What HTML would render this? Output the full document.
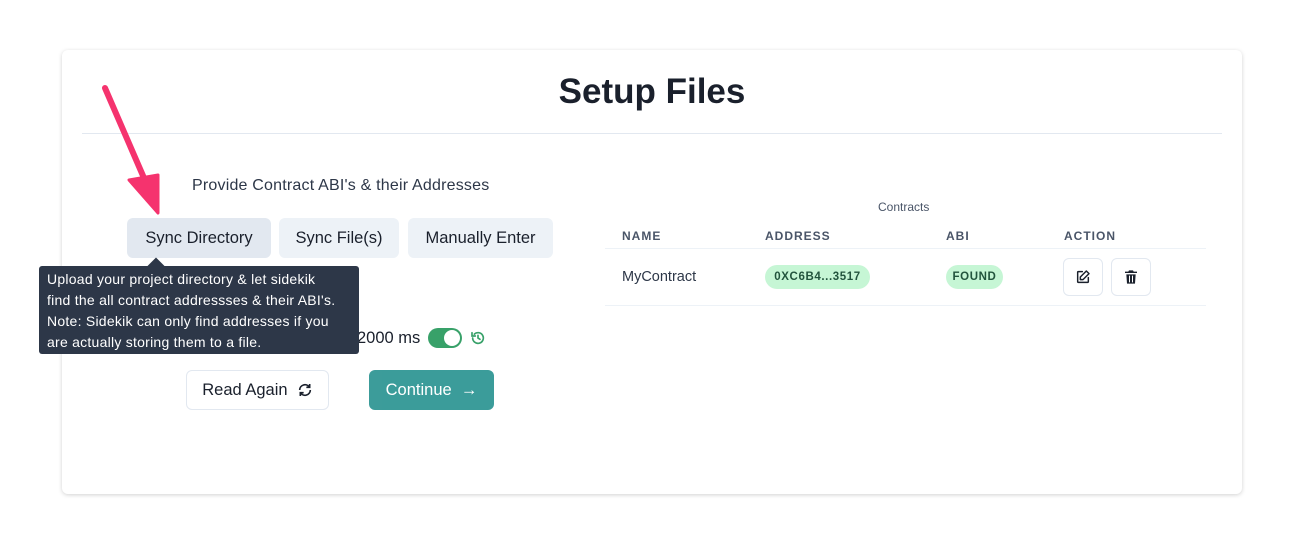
<!DOCTYPE html>
<html><head><style>
*{box-sizing:border-box;margin:0;padding:0}
body{width:1290px;height:556px;background:#fff;font-family:"Liberation Sans",sans-serif;position:relative;overflow:hidden;color:#1a202c}
.card{position:absolute;left:62px;top:50px;width:1180px;height:444px;border-radius:6px;box-shadow:0 1px 4px rgba(0,0,0,.18);background:#fff}
.abs{position:absolute}
h1{position:absolute;left:0;width:1180px;top:72px;text-align:center;font-size:35px;font-weight:bold;color:#1a202c}
.btn{position:absolute;height:40px;border-radius:6px;font-size:16.5px;display:flex;align-items:center;justify-content:center;color:#1a202c}
.gray{background:#edf2f7}
.badge{position:absolute;height:24px;border-radius:12px;background:#c6f6d5;color:#22543d;font-size:11.5px;font-weight:bold;letter-spacing:.6px;display:flex;align-items:center;justify-content:center}
.ib{position:absolute;width:40px;height:38px;border:1px solid #e2e8f0;border-radius:6px;display:flex;align-items:center;justify-content:center}
</style></head><body>
<div class="card"></div>
<h1 style="left:62px">Setup Files</h1>
<div class="abs" style="left:82px;top:133px;width:1140px;height:1px;background:#e2e8f0"></div>
<div class="abs" style="left:192px;top:177px;font-size:16px;color:#2d3748;letter-spacing:.2px">Provide Contract ABI's &amp; their Addresses</div>
<div class="btn" style="left:127px;top:218px;width:144px;background:#e2e8f0">Sync Directory</div>
<div class="btn gray" style="left:279px;top:218px;width:120px">Sync File(s)</div>
<div class="btn gray" style="left:408px;top:218px;width:145px">Manually Enter</div>
<div class="abs" style="left:357px;top:329px;font-size:16.5px;color:#1a202c">2000 ms</div>
<div class="abs" style="left:428px;top:328px;width:34px;height:20px;border-radius:10px;background:#38a169"><div class="abs" style="left:16px;top:2px;width:16px;height:16px;border-radius:50%;background:#fff"></div></div>
<svg class="abs" style="left:470px;top:330px" width="16" height="16" viewBox="0 0 24 24" fill="none" stroke="#38a169" stroke-width="2.5" stroke-linecap="round"><path d="M4 12a8 8 0 1 0 2.5-5.8"/><path d="M3 4v5h5"/><path d="M12 8v4l3 2"/></svg>
<div class="abs" style="left:39px;top:266px;width:320px;height:88px;background:#2d3748;border-radius:3px;color:#fff;font-size:14px;line-height:21px;padding:3px 8px;white-space:nowrap;letter-spacing:.25px"><div class="abs" style="left:111px;top:-6px;width:12px;height:12px;background:#2d3748;transform:rotate(45deg)"></div>Upload your project directory &amp; let sidekik<br>find the all contract addressses &amp; their ABI's.<br>Note: Sidekik can only find addresses if you<br>are actually storing them to a file.</div>
<div class="btn" style="left:186px;top:370px;width:143px;border:1px solid #e2e8f0">Read Again&nbsp;&nbsp;<svg width="16" height="16" viewBox="0 0 24 24" fill="none" stroke="#1a202c" stroke-width="2.5"><path d="M20 12a8 8 0 0 1-14.5 4.5M4 12a8 8 0 0 1 14.5-4.5"/><path d="M19 3v5h-5M5 21v-5h5"/></svg></div>
<div class="btn" style="left:369px;top:370px;width:125px;background:#319795;color:#fff;opacity:.95">Continue&nbsp;&nbsp;→</div>
<div class="abs" style="left:878px;top:200px;font-size:12px;color:#4a5568">Contracts</div>
<div class="abs" style="left:622px;top:229px;font-size:12px;letter-spacing:1px;color:#4a5568;font-weight:bold">NAME</div>
<div class="abs" style="left:765px;top:229px;font-size:12px;letter-spacing:1px;color:#4a5568;font-weight:bold">ADDRESS</div>
<div class="abs" style="left:946px;top:229px;font-size:12px;letter-spacing:1px;color:#4a5568;font-weight:bold">ABI</div>
<div class="abs" style="left:1064px;top:229px;font-size:12px;letter-spacing:1px;color:#4a5568;font-weight:bold">ACTION</div>
<div class="abs" style="left:605px;top:248px;width:601px;height:1px;background:#edf2f7"></div>
<div class="abs" style="left:605px;top:305px;width:601px;height:1px;background:#edf2f7"></div>
<div class="abs" style="left:622px;top:269px;font-size:14.5px;color:#2d3748">MyContract</div>
<div class="badge" style="left:765px;top:265px;width:105px">0XC6B4...3517</div>
<div class="badge" style="left:946px;top:265px;width:57px">FOUND</div>
<div class="ib" style="left:1063px;top:258px"><svg width="16" height="16" viewBox="0 0 24 24" fill="none" stroke="#1a202c" stroke-width="2.2" stroke-linecap="round" stroke-linejoin="round"><path d="M11 4H5a1 1 0 0 0-1 1v14a1 1 0 0 0 1 1h14a1 1 0 0 0 1-1v-6"/><path d="M17 3l4 4-9 9H8v-4z"/></svg></div>
<div class="ib" style="left:1111px;top:258px"><svg width="16" height="16" viewBox="0 0 24 24" fill="#1a202c"><path d="M9 2h6l1 2h5v2H3V4h5z"/><path d="M5 8h14l-1 14H6zM9 10v10h1.5V10zM13.5 10v10H15V10z" fill-rule="evenodd"/></svg></div>
<svg class="abs" style="left:95px;top:80px" width="75" height="140" viewBox="0 0 75 140"><line x1="10" y1="8" x2="52" y2="105" stroke="#f5336e" stroke-width="6" stroke-linecap="round"/><path d="M34 100 L63 133 L63 95 Z" fill="#f5336e" stroke="#f5336e" stroke-width="3" stroke-linejoin="round"/></svg>
</body></html>
